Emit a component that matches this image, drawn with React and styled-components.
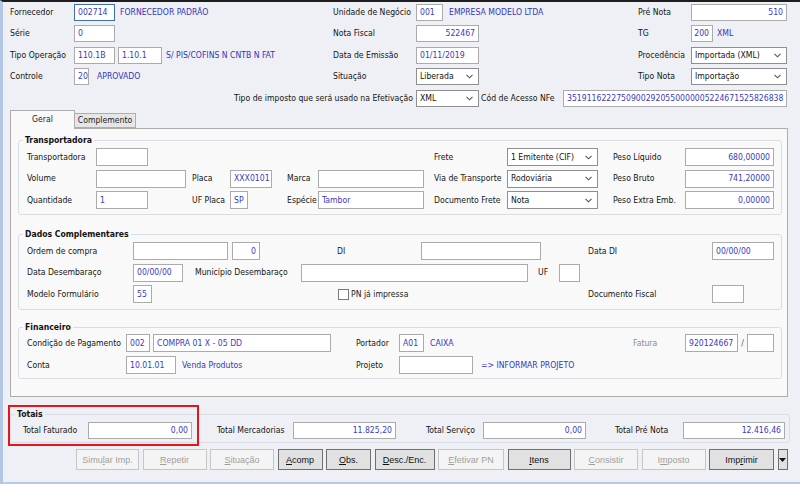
import React from 'react'
import styled, {createGlobalStyle} from 'styled-components'

const GlobalStyle = createGlobalStyle`
  html, body {
    margin: 0;
    padding: 0;
  }
  body {
    background: #eef0f5;
    font-family: "DejaVu Sans Condensed", "DejaVu Sans", sans-serif;
    font-stretch: 87.5%;
    font-size: 8.6px;
    color: #1b1b1b;
  }
`

const Window = styled.div`
  width: 800px;
  height: 484px;
  box-sizing: border-box;
  background: #eef0f5;
  border-top: 2px solid #1e1e1e;
  border-left: 3px solid #b3c6e4;
  border-bottom: 2px solid #b9c9e5;
  display: flex;
  flex-direction: column;
  overflow: hidden;
`

const Header = styled.div`
  display: flex;
  flex-direction: column;
  gap: 4.5px;
  padding: 1.5px 0 0 7px;
`

const Row = styled.div`
  display: flex;
  align-items: center;
  height: ${p => p.$h || 18}px;
  flex-shrink: 0;
`

const Col = styled.div`
  display: flex;
  align-items: center;
  height: 100%;
  width: ${p => (p.$w ? `${p.$w}px` : 'auto')};
  flex-shrink: 0;
`

const Label = styled.span`
  display: inline-block;
  flex-shrink: 0;
  width: ${p => (p.$w ? `${p.$w}px` : 'auto')};
  margin-left: ${p => p.$ml || 0}px;
  text-align: ${p => (p.$right ? 'right' : 'left')};
  padding-right: ${p => (p.$right ? 3 : 0)}px;
  box-sizing: border-box;
  color: ${p => (p.$muted ? '#8c8c8c' : '#141414')};
  white-space: nowrap;
  line-height: 1;
`

const Info = styled.span`
  display: inline-block;
  flex-shrink: 0;
  width: ${p => (p.$w ? `${p.$w}px` : 'auto')};
  margin-left: ${p => p.$ml || 0}px;
  color: #3535b8;
  white-space: nowrap;
  line-height: 1;
`

const Field = styled.div`
  flex-shrink: 0;
  box-sizing: border-box;
  width: ${p => p.$w}px;
  height: 100%;
  margin-left: ${p => p.$ml || 0}px;
  background: #fff;
  border: 1px solid ${p => (p.$focus ? '#3d6fb6' : '#ababab')};
  color: #3a3abd;
  padding: 0 3px;
  display: flex;
  align-items: center;
  justify-content: ${p => (p.$right ? 'flex-end' : 'flex-start')};
  white-space: nowrap;
  overflow: hidden;
  line-height: 1;
`

const SelectBox = styled.div`
  flex-shrink: 0;
  box-sizing: border-box;
  width: ${p => p.$w}px;
  height: 100%;
  background: #fff;
  border: 1px solid #8f8f8f;
  color: #111;
  padding: 0 5px 0 3px;
  display: flex;
  align-items: center;
  justify-content: space-between;
  white-space: nowrap;
  line-height: 1;
`

const Chevron = () => (
  <svg width="7" height="5" viewBox="0 0 7 5">
    <path d="M0.5 0.8 L3.5 3.8 L6.5 0.8" fill="none" stroke="#555" strokeWidth="1.1" />
  </svg>
)

const Select = ({w, children}) => (
  <SelectBox $w={w}>
    <span>{children}</span>
    <Chevron />
  </SelectBox>
)

const TabStrip = styled.div`
  display: flex;
  align-items: flex-end;
  margin: 3.5px 0 0 7px;
  height: 18px;
  position: relative;
  z-index: 1;
`

const Tab = styled.div`
  box-sizing: border-box;
  width: ${p => p.$w}px;
  height: ${p => (p.$active ? 19 : 15)}px;
  margin-bottom: ${p => (p.$active ? -1 : 0)}px;
  border: 1px solid #adadad;
  border-bottom: ${p => (p.$active ? 'none' : '1px solid #adadad')};
  border-left: ${p => (p.$active ? '1px solid #adadad' : 'none')};
  background: ${p => (p.$active ? '#f9f9f9' : '#e6e6e6')};
  display: flex;
  align-items: center;
  justify-content: center;
  padding-bottom: ${p => (p.$active ? 2 : 0)}px;
  line-height: 1;
`

const Panel = styled.div`
  box-sizing: border-box;
  margin: 0 12px 0 7px;
  height: 269px;
  border: 1px solid #adadad;
  background: #f9f9f9;
  padding: 5.5px 5px 0 7px;
  display: flex;
  flex-direction: column;
`

const Group = styled.fieldset`
  margin: ${p => p.$mt || 0}px 0 0 0;
  padding: 0 8px ${p => p.$pb || 5}px 8px;
  border: 1px solid #d9dde5;
  border-radius: 3px;
  min-width: 0;
  position: relative;
`

const Legend = styled.legend`
  font-weight: bold;
  padding: 0 2px;
  margin-left: -4px;
  line-height: 11px;
  color: #111;
`

const Rows = styled.div`
  display: flex;
  flex-direction: column;
  gap: ${p => p.$gap}px;
  padding-top: ${p => p.$pt}px;
  padding-left: ${p => p.$pl || 0}px;
`

const CheckWrap = styled.label`
  display: flex;
  align-items: center;
  flex-shrink: 0;
  width: 250px;
  margin-left: ${p => p.$ml}px;
  line-height: 1;
`

const CheckBox = styled.span`
  width: 11px;
  height: 11px;
  box-sizing: border-box;
  border: 1px solid #7a7a7a;
  background: #fff;
  margin-right: 2px;
`

const Slash = styled.span`
  width: 9px;
  text-align: center;
  color: #555;
  flex-shrink: 0;
`

const TotalsBox = styled(Group)`
  margin: 11.5px 10px 0 7px;
`

const Highlight = styled.div`
  position: absolute;
  left: -3px;
  top: -14.5px;
  width: 191px;
  height: 41px;
  box-sizing: border-box;
  border: 2px solid #e8141c;
  pointer-events: none;
`

const ButtonBar = styled.div`
  display: flex;
  gap: 3.5px;
  margin: 6px 0 0 73px;
  height: 21px;
`

const Button = styled.button`
  box-sizing: border-box;
  width: ${p => p.$w}px;
  height: 21px;
  padding: 0;
  font: inherit;
  font-family: "Liberation Sans", Arial, sans-serif;
  font-stretch: normal;
  font-size: 9px;
  border: 1px solid ${p => (p.disabled ? '#c6c6c6' : '#6f6f6f')};
  background: ${p => (p.disabled ? '#f4f4f4' : '#e1e1e1')};
  color: ${p => (p.disabled ? '#9f9f9f' : '#111')};
  display: flex;
  align-items: center;
  justify-content: center;
`

const ArrowButton = styled(Button)`
  width: 10px;
`

const buttons = [
  {pre: 'Simu', key: 'l', post: 'ar Imp.', w: 63, off: true},
  {pre: '', key: 'R', post: 'epetir', w: 64, off: true},
  {pre: '', key: 'S', post: 'ituação', w: 64, off: true},
  {pre: '', key: 'A', post: 'comp', w: 45},
  {pre: '', key: 'O', post: 'bs.', w: 45},
  {pre: '', key: 'D', post: 'esc./Enc.', w: 60},
  {pre: '', key: 'E', post: 'fetivar PN', w: 66, off: true},
  {pre: '', key: 'I', post: 'tens', w: 63},
  {pre: '', key: 'C', post: 'onsistir', w: 64, off: true},
  {pre: 'I', key: 'm', post: 'posto', w: 64, off: true},
  {pre: 'Imp', key: 'r', post: 'imir', w: 65},
]

export default function App() {
  return (
    <Window>
      <GlobalStyle />
      <Header>
        <Row $h={17}>
          <Col $w={323}>
            <Label $w={64}>Fornecedor</Label>
            <Field $w={41} $focus>002714</Field>
            <Info $ml={5}>FORNECEDOR PADRÃO</Info>
          </Col>
          <Col $w={305}>
            <Label $w={83}>Unidade de Negócio</Label>
            <Field $w={27}>001</Field>
            <Info $ml={6}>EMPRESA MODELO LTDA</Info>
          </Col>
          <Col>
            <Label $w={53}>Pré Nota</Label>
            <Field $w={96} $right>510</Field>
          </Col>
        </Row>
        <Row $h={17}>
          <Col $w={323}>
            <Label $w={64}>Série</Label>
            <Field $w={41}>0</Field>
          </Col>
          <Col $w={305}>
            <Label $w={83}>Nota Fiscal</Label>
            <Field $w={63} $right>522467</Field>
          </Col>
          <Col>
            <Label $w={53}>TG</Label>
            <Field $w={22} $right>200</Field>
            <Info $ml={4}>XML</Info>
          </Col>
        </Row>
        <Row $h={17}>
          <Col $w={323}>
            <Label $w={64}>Tipo Operação</Label>
            <Field $w={41}>110.1B</Field>
            <Field $w={44} $ml={3}>1.10.1</Field>
            <Info $ml={4}>S/ PIS/COFINS N CNTB N FAT</Info>
          </Col>
          <Col $w={305}>
            <Label $w={83}>Data de Emissão</Label>
            <Field $w={63}>01/11/2019</Field>
          </Col>
          <Col>
            <Label $w={53}>Procedência</Label>
            <Select w={96}>Importada (XML)</Select>
          </Col>
        </Row>
        <Row $h={17}>
          <Col $w={323}>
            <Label $w={64}>Controle</Label>
            <Field $w={15}>20</Field>
            <Info $ml={8}>APROVADO</Info>
          </Col>
          <Col $w={305}>
            <Label $w={83}>Situação</Label>
            <Select w={63}>Liberada</Select>
          </Col>
          <Col>
            <Label $w={53}>Tipo Nota</Label>
            <Select w={96}>Importação</Select>
          </Col>
        </Row>
        <Row $h={17}>
          <Label $w={406} $right>Tipo de imposto que será usado na Efetivação</Label>
          <Select w={63}>XML</Select>
          <Label $w={82} $ml={2}>Cód de Acesso NFe</Label>
          <Field $w={224}>35191162227509002920550000005224671525826838</Field>
        </Row>
      </Header>

      <TabStrip>
        <Tab $w={65} $active>Geral</Tab>
        <Tab $w={61}>Complemento</Tab>
      </TabStrip>
      <Panel>
        <Group $pb={5}>
          <Legend>Transportadora</Legend>
          <Rows $gap={3.5} $pt={2.5}>
            <Row>
              <Label $w={69}>Transportadora</Label>
              <Field $w={52} />
              <Label $w={73} $ml={286}>Frete</Label>
              <Select w={91}>1 Emitente (CIF)</Select>
              <Label $w={72} $ml={15}>Peso Líquido</Label>
              <Field $w={89} $right>680,00000</Field>
            </Row>
            <Row>
              <Label $w={69}>Volume</Label>
              <Field $w={90} />
              <Label $w={38} $ml={6}>Placa</Label>
              <Field $w={42}>XXX0101</Field>
              <Label $w={31} $ml={15}>Marca</Label>
              <Field $w={106} />
              <Label $w={73} $ml={10}>Via de Transporte</Label>
              <Select w={91}>Rodoviária</Select>
              <Label $w={72} $ml={15}>Peso Bruto</Label>
              <Field $w={89} $right>741,20000</Field>
            </Row>
            <Row>
              <Label $w={69}>Quantidade</Label>
              <Field $w={52}>1</Field>
              <Label $w={38} $ml={44}>UF Placa</Label>
              <Field $w={18}>SP</Field>
              <Label $w={31} $ml={39}>Espécie</Label>
              <Field $w={106}>Tambor</Field>
              <Label $w={73} $ml={10}>Documento Frete</Label>
              <Select w={91}>Nota</Select>
              <Label $w={72} $ml={15}>Peso Extra Emb.</Label>
              <Field $w={89} $right>0,00000</Field>
            </Row>
          </Rows>
        </Group>

        <Group $mt={14} $pb={6}>
          <Legend>Dados Complementares</Legend>
          <Rows $gap={3.5} $pt={2}>
            <Row>
              <Label $w={106}>Ordem de compra</Label>
              <Field $w={95} />
              <Field $w={28} $ml={4} $right>0</Field>
              <Label $w={84} $ml={77}>DI</Label>
              <Field $w={120} />
              <Label $w={124} $ml={47}>Data DI</Label>
              <Field $w={62}>00/00/00</Field>
            </Row>
            <Row>
              <Label $w={106}>Data Desembaraço</Label>
              <Field $w={50}>00/00/00</Field>
              <Label $w={106} $ml={12}>Município Desembaraço</Label>
              <Field $w={227} />
              <Label $w={21} $ml={10}>UF</Label>
              <Field $w={21} />
            </Row>
            <Row>
              <Label $w={106}>Modelo Formulário</Label>
              <Field $w={19}>55</Field>
              <CheckWrap $ml={186}>
                <CheckBox />
                PN já impressa
              </CheckWrap>
              <Label $w={124}>Documento Fiscal</Label>
              <Field $w={32} />
            </Row>
          </Rows>
        </Group>

        <Group $mt={11.5} $pb={4}>
          <Legend>Financeiro</Legend>
          <Rows $gap={4} $pt={1.5}>
            <Row>
              <Label $w={99}>Condição de Pagamento</Label>
              <Field $w={24}>002</Field>
              <Field $w={178} $ml={3}>COMPRA 01 X - 05 DD</Field>
              <Label $w={43} $ml={25}>Portador</Label>
              <Field $w={25}>A01</Field>
              <Info $w={203} $ml={6}>CAIXA</Info>
              <Label $w={52} $muted>Fatura</Label>
              <Field $w={53}>920124667</Field>
              <Slash>/</Slash>
              <Field $w={27} />
            </Row>
            <Row>
              <Label $w={99}>Conta</Label>
              <Field $w={50}>10.01.01</Field>
              <Info $w={174} $ml={6}>Venda Produtos</Info>
              <Label $w={43}>Projeto</Label>
              <Field $w={74} />
              <Info $ml={8}>=&gt; INFORMAR PROJETO</Info>
            </Row>
          </Rows>
        </Group>
      </Panel>

      <TotalsBox $pb={3}>
        <Legend>Totais</Legend>
        <Highlight />
        <Rows $gap={0} $pt={2.5} $pl={4}>
          <Row $h={17}>
            <Label $w={65}>Total Faturado</Label>
            <Field $w={104} $right>0,00</Field>
            <Label $w={76} $ml={25}>Total Mercadorias</Label>
            <Field $w={103} $right>11.825,20</Field>
            <Label $w={57} $ml={30}>Total Serviço</Label>
            <Field $w={103} $right>0,00</Field>
            <Label $w={68} $ml={29}>Total Pré Nota</Label>
            <Field $w={102} $right>12.416,46</Field>
          </Row>
        </Rows>
      </TotalsBox>

      <ButtonBar>
        {buttons.map(b => (
          <Button key={b.post} $w={b.w} disabled={b.off}>
            {b.pre}
            <u>{b.key}</u>
            {b.post}
          </Button>
        ))}
        <ArrowButton $w={10}>
          <svg width="7" height="4" viewBox="0 0 7 4">
            <path d="M0 0 H7 L3.5 4 Z" fill="#111" />
          </svg>
        </ArrowButton>
      </ButtonBar>
    </Window>
  )
}
